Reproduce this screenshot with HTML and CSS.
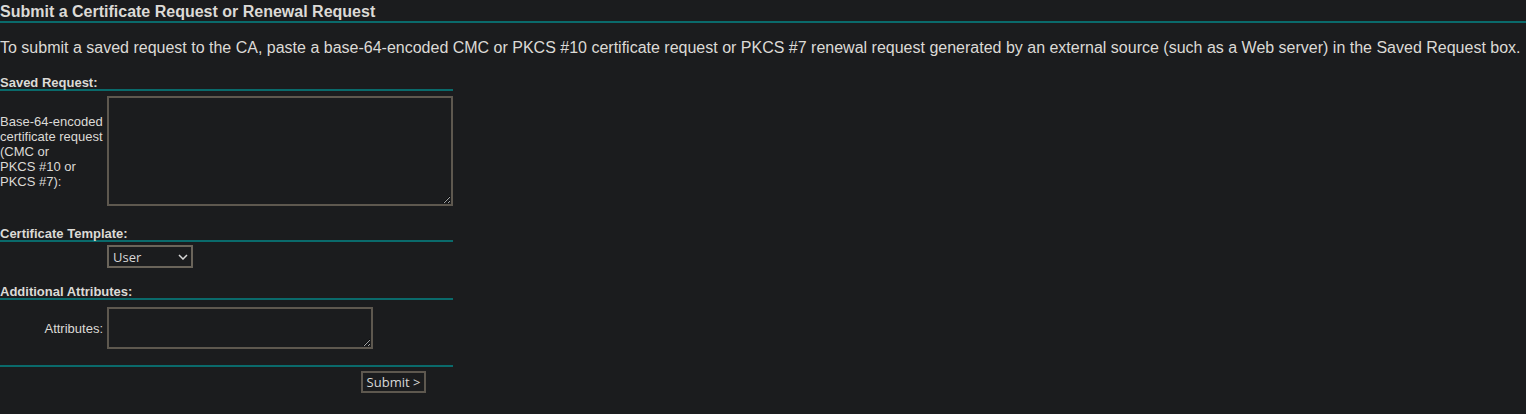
FILE: index.html
```html
<!DOCTYPE html>
<html>
<head>
<meta charset="utf-8">
<link rel="stylesheet" href="styles.css">
</head>
<body>
<div class="title">Submit a Certificate Request or Renewal Request</div>
<div class="rule"></div>
<p class="info">To submit a saved request to the CA, paste a base-64-encoded CMC or PKCS #10 certificate request or PKCS #7 renewal request generated by an external source (such as a Web server) in the Saved Request box.</p>
<form class="form">
  <div class="head head-first">Saved Request:</div>
  <div class="rule"></div>
  <div class="row row-req">
    <div class="label">Base-64-encoded<br>certificate request<br>(CMC or<br>PKCS #10 or<br>PKCS #7):</div>
    <textarea class="req"></textarea>
  </div>

  <div class="head head-tpl">Certificate Template:</div>
  <div class="rule"></div>
  <div class="row row-tpl">
    <div class="label"></div>
    <span class="select-wrap">
      <select class="tpl"><option>User</option></select>
      <svg class="chev" width="10" height="6" viewBox="0 0 10 6"><path d="M1 1 L5 5 L9 1" fill="none" stroke="#d8d8d8" stroke-width="1.5"/></svg>
    </span>
  </div>

  <div class="head head-attr">Additional Attributes:</div>
  <div class="rule"></div>
  <div class="row row-attr">
    <div class="label label-right">Attributes:</div>
    <textarea class="attr"></textarea>
  </div>

  <div class="rule rule-end"></div>
  <div class="actions">
    <button type="button" class="submit">Submit &gt;</button>
  </div>
</form>
</body>
</html>
```

FILE: styles.css
```css
html, body {
  margin: 0;
  padding: 0;
  background: #1b1c1e;
}
body {
  color: #dcdad6;
  font-family: "Liberation Sans", Arial, sans-serif;
  font-size: 16px;
}
.title {
  font-weight: bold;
  font-size: 16px;
  line-height: 19px;
  padding-top: 2px;
}
.rule {
  height: 2px;
  background: #0a6a6b;
}
.info {
  margin: 16px 0 0 0;
  line-height: 18px;
}
.form {
  width: 453px;
  margin: 0;
}
.head {
  font-weight: bold;
  font-size: 13px;
  line-height: 13px;
}
.head-first { margin-top: 19px; }
.head-tpl { margin-top: 21px; }
.head-attr { margin-top: 17px; }
.row {
  display: grid;
  grid-template-columns: 103px auto;
  column-gap: 4px;
  align-items: center;
  justify-content: start;
}
.row-req { margin-top: 5px; }
.row-tpl { margin-top: 3px; }
.row-attr { margin-top: 7px; }
.label {
  font-size: 13px;
  line-height: 15px;
}
.label-right { text-align: right; }
textarea {
  box-sizing: border-box;
  background: #1b1c1e;
  border: 2px solid #5e584f;
  color: #dcdad6;
  margin: 0;
  padding: 2px;
  display: block;
}
.req {
  width: 346px;
  height: 110px;
}
.attr {
  width: 266px;
  height: 42px;
}
.select-wrap {
  position: relative;
  display: inline-block;
  width: 86px;
  height: 23px;
}
.tpl {
  appearance: none;
  -webkit-appearance: none;
  box-sizing: border-box;
  width: 86px;
  height: 23px;
  margin: 0;
  padding: 0 0 0 4px;
  background: #1b1c1e;
  border: 2px solid #6a645a;
  border-radius: 0;
  color: #d8d8d8;
  font-family: "Open Sans", "Noto Sans", sans-serif;
  font-size: 13px;
  display: block;
}
.chev {
  position: absolute;
  left: 71px;
  top: 9px;
  pointer-events: none;
}
.rule-end { margin-top: 16px; }
.actions {
  display: flex;
  justify-content: flex-end;
  padding-right: 27px;
  margin-top: 4px;
}
.submit {
  box-sizing: border-box;
  width: 65px;
  height: 22px;
  margin: 0;
  padding: 0;
  background: #1b1c1e;
  border: 2px solid #5e584f;
  border-radius: 0;
  color: #d8d8d8;
  font-family: "Open Sans", "Noto Sans", sans-serif;
  font-size: 13px;
}
```
